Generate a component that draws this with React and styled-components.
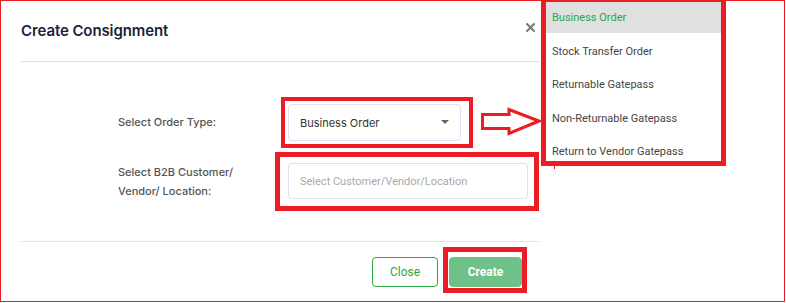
import React from "react";
import styled, { createGlobalStyle } from "styled-components";

const RED = "#ec1c24";
const GREEN = "#28a745";

const Global = createGlobalStyle`
  html, body { margin: 0; padding: 0; background: #fff; }
  body { font-family: Inter, "Noto Sans", sans-serif; }
  * { box-sizing: border-box; }
`;

const Frame = styled.div`
  position: relative;
  width: 785px;
  height: 302px;
  border: 1px solid ${RED};
  background: #fff;
  overflow: hidden;
`;

const Modal = styled.div`
  width: 538px;
  padding-left: 20px;
  display: flex;
  flex-direction: column;
`;

const Header = styled.div`
  height: 61px;
  display: flex;
  align-items: center;
  justify-content: space-between;
  padding: 0 4px 2px 0;
  border-bottom: 1px solid #dedede;
`;

const Title = styled.h1`
  margin: 0;
  font-family: Inter, sans-serif;
  font-size: 15px;
  font-weight: 600;
  color: #1d1f3d;
  letter-spacing: -0.1px;
`;

const CloseIcon = styled.svg`
  display: block;
  margin-top: -6px;
`;

const Body = styled.div`
  display: grid;
  grid-template-columns: 157px 1fr;
  row-gap: 4px;
  align-items: center;
  padding: 35px 0 30px 97px;
  border-bottom: 1px solid #e2e2ea;
`;

const Label = styled.label`
  font-family: Inter, sans-serif;
  font-size: 11px;
  font-weight: 500;
  color: #555;
  line-height: 19px;
`;

const Highlight = styled.div`
  justify-self: start;
  display: flex;
  margin-left: ${(p) => p.$offset || 0}px;
  border: ${(p) => p.$border || 5}px solid ${RED};
  padding: ${(p) => p.$pad};
`;

const Field = styled.div`
  display: flex;
  align-items: center;
  justify-content: space-between;
  width: ${(p) => p.$w}px;
  height: ${(p) => p.$h}px;
  padding: 0 11px 0 11px;
  border: 1px solid #dfe0f2;
  border-radius: 4px;
  background: #fff;
  font-family: ${(p) => (p.$placeholder ? "Roboto, sans-serif" : "Inter, sans-serif")};
  font-size: 11px;
  color: ${(p) => (p.$placeholder ? "#a9a9a9" : "#333")};
`;

const Caret = styled.span`
  width: 0;
  height: 0;
  border-left: 4px solid transparent;
  border-right: 4px solid transparent;
  border-top: 4px solid #666;
  margin-top: -1px;
`;

const Footer = styled.div`
  display: flex;
  justify-content: flex-end;
  align-items: flex-end;
  gap: 5px;
  padding: 5px 12px 0 0;
`;

const Button = styled.button`
  height: 30px;
  width: ${(p) => p.$w}px;
  border-radius: 4px;
  font-family: Roboto, sans-serif;
  font-size: 12px;
  font-weight: ${(p) => (p.$primary ? 700 : 400)};
  cursor: pointer;
  border: 1px solid ${(p) => (p.$primary ? "#6dc189" : GREEN)};
  background: ${(p) => (p.$primary ? "#6dc189" : "#fff")};
  color: ${(p) => (p.$primary ? "#fff" : GREEN)};
  margin-bottom: ${(p) => p.$mb || 0}px;
`;

const Menu = styled.ul`
  position: absolute;
  left: 540px;
  top: -1px;
  width: 185px;
  height: 166px;
  margin: 0;
  padding: 0;
  list-style: none;
  background: #fff;
  border: 5px solid ${RED};
  border-top-width: 2px;
  overflow: hidden;
  display: flex;
  flex-direction: column;
  gap: 2.5px;
`;

const MenuItem = styled.li`
  flex: none;
  height: 31px;
  display: flex;
  align-items: center;
  padding: 0 6px;
  font-family: Roboto, sans-serif;
  font-size: 11px;
  color: ${(p) => (p.$active ? GREEN : "#444")};
  background: ${(p) => (p.$active ? "#e0e0e0" : "#fff")};
`;

const Arrow = styled.svg`
  position: absolute;
  left: 479px;
  top: 106px;
`;

const Tick = styled.span`
  position: absolute;
  left: 553px;
  top: 164px;
  width: 1px;
  height: 4px;
  background: ${RED};
`;

const items = [
  "Business Order",
  "Stock Transfer Order",
  "Returnable Gatepass",
  "Non-Returnable Gatepass",
  "Return to Vendor Gatepass",
];

export default function App() {
  return (
    <>
      <Global />
      <Frame>
        <Modal>
          <Header>
            <Title>Create Consignment</Title>
            <CloseIcon width="9" height="9" viewBox="0 0 9 9" aria-label="close">
              <path d="M1.2 1.2 L7.8 7.8 M7.8 1.2 L1.2 7.8" stroke="#7a7a7a" strokeWidth="2.2" strokeLinecap="square" />
            </CloseIcon>
          </Header>
          <Body>
            <Label>Select Order Type:</Label>
            <Highlight $offset={6} $border={4} $pad="3px 8px 3px 3px">
              <Field $w={173} $h={37}>
                <span>Business Order</span>
                <Caret />
              </Field>
            </Highlight>
            <Label>
              Select B2B Customer/
              <br />
              Vendor/ Location:
            </Label>
            <Highlight $border={5} $pad="6px 6px 7px 8px">
              <Field $w={240} $h={36} $placeholder>
                <span>Select Customer/Vendor/Location</span>
              </Field>
            </Highlight>
          </Body>
          <Footer>
            <Button $w={66} $mb={6}>Close</Button>
            <Highlight $border={5} $pad="5px 0 1px 1px">
              <Button $w={73} $primary>Create</Button>
            </Highlight>
          </Footer>
        </Modal>
        <Arrow width="62" height="30" viewBox="0 0 62 30">
          <polygon
            points="2.5,7.5 29,7.5 29,2.5 59,14 29,26.5 29,21.5 2.5,21.5"
            fill="#fff"
            stroke={RED}
            strokeWidth="3"
            strokeLinejoin="miter"
          />
        </Arrow>
        <Menu>
          {items.map((t, i) => (
            <MenuItem key={t} $active={i === 0}>
              {t}
            </MenuItem>
          ))}
        </Menu>
        <Tick />
      </Frame>
    </>
  );
}
